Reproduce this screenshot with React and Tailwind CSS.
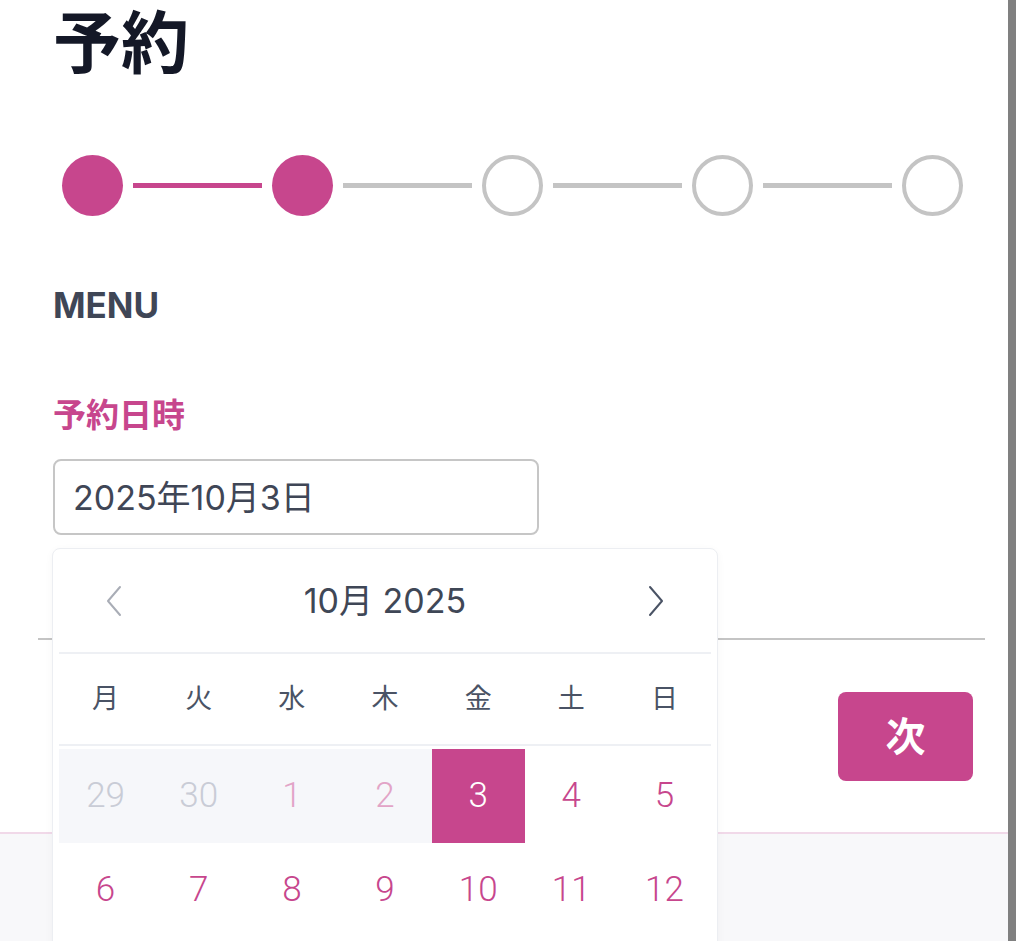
import React from 'react'

const PINK = 'bg-[#c7468d]'

const Step = ({ done }) =>
  done ? (
    <div className={`w-[61px] h-[61px] rounded-full ${PINK} shrink-0`} />
  ) : (
    <div className="w-[61px] h-[61px] rounded-full border-[4px] border-[#c4c4c4] bg-white shrink-0" />
  )

const Line = ({ done }) => (
  <div className={`w-[129px] h-[5px] mx-[10px] shrink-0 ${done ? PINK : 'bg-[#c4c4c4]'}`} />
)

const Stepper = () => (
  <div className="flex items-center ml-[9px] mt-[68px]">
    <Step done />
    <Line done />
    <Step done />
    <Line />
    <Step />
    <Line />
    <Step />
    <Line />
    <Step />
  </div>
)

const Chevron = ({ dir, className }) => (
  <svg width="18" height="32" viewBox="0 0 18 32" fill="none" className={className}>
    {dir === 'left' ? (
      <polyline points="15,2 3,16 15,30" stroke="currentColor" strokeWidth="2" strokeLinecap="round" strokeLinejoin="round" />
    ) : (
      <polyline points="3,2 15,16 3,30" stroke="currentColor" strokeWidth="2" strokeLinecap="round" strokeLinejoin="round" />
    )}
  </svg>
)

const weekdays = ['月', '火', '水', '木', '金', '土', '日']

const rows = [
  [
    { d: 29, kind: 'past-other' },
    { d: 30, kind: 'past-other' },
    { d: 1, kind: 'past' },
    { d: 2, kind: 'past' },
    { d: 3, kind: 'selected' },
    { d: 4 },
    { d: 5 },
  ],
  [{ d: 6 }, { d: 7 }, { d: 8 }, { d: 9 }, { d: 10 }, { d: 11 }, { d: 12 }],
]

const dayClass = (kind) => {
  if (kind === 'past-other') return 'bg-[#f6f7fa] text-[#c9ccd6]'
  if (kind === 'past') return 'bg-[#f6f7fa] text-[#e2a4c7]'
  if (kind === 'selected') return 'bg-[#c7468d] text-white'
  return 'text-[#c7468d]'
}

const Calendar = () => (
  <div className="absolute left-[52px] top-[548px] w-[666px] h-[420px] bg-white border border-[#eceef2] rounded-[8px] shadow-[0_2px_8px_rgba(0,0,0,0.04)] px-[6px]">
    <div className="h-[103px] flex items-center justify-between px-[46px]">
      <Chevron dir="left" className="text-[#a9adb6]" />
      <span className="text-[34px] leading-none text-[#3f4756]">10月 2025</span>
      <Chevron dir="right" className="text-[#4a5365]" />
    </div>
    <div className="h-[2px] bg-[#eef0f4]" />
    <div className="grid grid-cols-7 h-[90px] items-center text-center text-[27px] text-[#4a5365]">
      {weekdays.map((w) => (
        <span key={w}>{w}</span>
      ))}
    </div>
    <div className="h-[2px] bg-[#eef0f4]" />
    <div className="mt-[3px]">
      {rows.map((r, i) => (
        <div key={i} className="grid grid-cols-7">
          {r.map((c) => (
            <div
              key={c.d}
              className={`h-[94px] flex items-center justify-center text-[35px] font-[Roboto] font-light ${dayClass(c.kind)}`}
            >
              {c.d}
            </div>
          ))}
        </div>
      ))}
    </div>
  </div>
)

export default function App() {
  return (
    <div className="flex h-[941px] overflow-hidden bg-white font-['Inter','Noto_Sans_CJK_JP',sans-serif]">
      <div className="relative w-[1008px] flex flex-col shrink-0">
        <div className="px-[53px]">
          <h1 className="h-[87px] leading-[87px] text-[68px] font-bold text-[#141827]">予約</h1>
          <Stepper />
          <div className="mt-[69px] h-[40px] leading-[40px] text-[35px] font-bold text-[#3f4656]">MENU</div>
          <div className="mt-[70px] h-[40px] leading-[40px] text-[33px] font-bold text-[#c7468d]">予約日時</div>
          <div className="mt-[24px] w-[486px] h-[76px] border-2 border-[#c6c6c6] rounded-[8px] flex items-center px-[18px] text-[34px] text-[#3f4656]">
            2025年10月3日
          </div>
        </div>
        <div className="mt-[103px] ml-[38px] mr-[23px] h-[2px] bg-[#c4c4c4]" />
        <div className="flex justify-end mr-[35px] mt-[52px]">
          <button className={`w-[135px] h-[89px] rounded-[8px] ${PINK} text-white text-[40px] font-bold`}>次</button>
        </div>
        <div className="mt-[51px] flex-1 border-t-2 border-[#f1d9e9] bg-[#f8f8fa]" />
        <Calendar />
      </div>
      <div className="w-[8px] bg-[#808080] shrink-0" />
      <div className="flex-1 bg-white" />
    </div>
  )
}
